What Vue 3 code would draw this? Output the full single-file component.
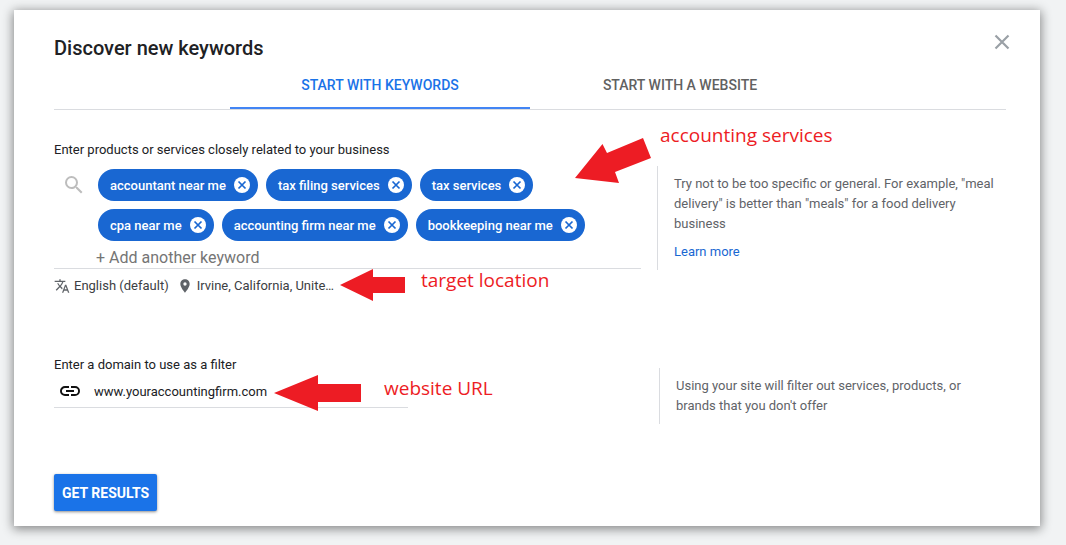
<script setup>
import { ref } from 'vue'

const keywords = ref([
  'accountant near me',
  'tax filing services',
  'tax services',
  'cpa near me',
  'accounting firm near me',
  'bookkeeping near me',
])
const draft = ref('')
const domain = ref('www.youraccountingfirm.com')
const activeTab = ref('keywords')
const tabs = [
  { id: 'keywords', label: 'START WITH KEYWORDS' },
  { id: 'website', label: 'START WITH A WEBSITE' },
]

function remove(word) {
  keywords.value = keywords.value.filter((k) => k !== word)
}
function add() {
  const word = draft.value.trim()
  if (word && !keywords.value.includes(word)) keywords.value.push(word)
  draft.value = ''
}
</script>

<template>
  <main class="card">
    <header class="head">
      <h1>Discover new keywords</h1>
      <button class="close" type="button" aria-label="Close">
        <svg width="16" height="16" viewBox="0 0 16 16"><path d="M1.5 1.5l13 13M14.5 1.5l-13 13" fill="none" stroke="#9aa0a6" stroke-width="2.2" /></svg>
      </button>
    </header>

    <nav class="tabs" role="tablist">
      <button
        v-for="tab in tabs"
        :key="tab.id"
        type="button"
        role="tab"
        class="tab"
        :class="{ active: activeTab === tab.id }"
        :aria-selected="activeTab === tab.id"
        @click="activeTab = tab.id"
      >{{ tab.label }}</button>
    </nav>

    <section class="row keywords">
      <div class="main">
        <label class="label" for="keyword">Enter products or services closely related to your business</label>
        <div class="field">
          <svg class="search" width="24" height="24" viewBox="0 0 24 24" fill="#bdbdbd"><path d="M15.5 14h-.79l-.28-.27A6.47 6.47 0 0 0 16 9.5 6.5 6.5 0 1 0 9.5 16c1.61 0 3.09-.59 4.23-1.57l.27.28v.79l5 4.99L20.49 19l-4.99-5zm-6 0a4.5 4.5 0 1 1 0-9 4.5 4.5 0 0 1 0 9z" /></svg>
          <div class="entry">
            <ul class="chips">
              <li v-for="word in keywords" :key="word" class="chip">
                <span>{{ word }}</span>
                <button type="button" class="remove" :aria-label="'Remove ' + word" @click="remove(word)">
                  <svg width="16" height="16" viewBox="0 0 16 16"><circle cx="8" cy="8" r="8" fill="#fff" /><path d="M4.5 4.5l7 7M11.500 4.500l-7 7" stroke="#1967d2" stroke-width="1.7" /></svg>
                </button>
              </li>
            </ul>
            <input id="keyword" v-model="draft" class="add" type="text" placeholder="+ Add another keyword" @keyup.enter="add" />
          </div>
        </div>
        <div class="settings">
          <button type="button" class="setting">
            <svg width="16" height="16" viewBox="0 0 24 24" fill="#5f6368"><path d="M12.87 15.07l-2.54-2.51.03-.03A17.52 17.52 0 0 0 14.07 6H17V4h-7V2H8v2H1v1.99h11.17C11.5 7.92 10.44 9.75 9 11.35 8.07 10.32 7.3 9.19 6.69 8h-2c.73 1.63 1.73 3.17 2.98 4.56l-5.09 5.02L4 19l5-5 3.11 3.11.76-2.04zM18.5 10h-2L12 22h2l1.12-3h4.75L21 22h2l-4.5-12zm-2.62 7l1.62-4.33L19.12 17h-3.24z" /></svg>
            <span>English (default)</span>
          </button>
          <button type="button" class="setting">
            <svg width="16" height="16" viewBox="0 0 24 24" fill="#5f6368"><path d="M12 2C8.13 2 5 5.13 5 9c0 5.25 7 13 7 13s7-7.75 7-13c0-3.87-3.13-7-7-7zm0 9.5a2.5 2.5 0 0 1 0-5 2.5 2.5 0 0 1 0 5z" /></svg>
            <span>Irvine, California, Unite…</span>
          </button>
        </div>
      </div>
      <aside class="hint">
        <p>Try not to be too specific or general. For example, "meal delivery" is better than "meals" for a food delivery business</p>
        <a href="#">Learn more</a>
      </aside>
    </section>

    <section class="row domain">
      <div class="main">
        <label class="label" for="domain">Enter a domain to use as a filter</label>
        <div class="url">
          <svg width="24" height="24" viewBox="0 0 24 24" fill="#111"><path d="M3.9 12c0-1.71 1.39-3.1 3.1-3.1h4V7H7a5 5 0 0 0 0 10h4v-1.9H7c-1.71 0-3.1-1.39-3.1-3.1zM8 13h8v-2H8v2zm9-6h-4v1.9h4a3.1 3.1 0 0 1 0 6.2h-4V17h4a5 5 0 0 0 0-10z" /></svg>
          <input id="domain" v-model="domain" type="text" />
        </div>
      </div>
      <aside class="hint">
        <p>Using your site will filter out services, products, or brands that you don't offer</p>
      </aside>
    </section>

    <button type="button" class="submit">GET RESULTS</button>

    <svg class="arrow arrow-services" width="76" height="46" viewBox="0 0 76 46"><path d="M0 40L27.500 6L32 15L68 0L76 20L40 34L44 45Z" /></svg>
    <span class="note note-services">accounting services</span>
    <svg class="arrow arrow-location" width="65" height="32" viewBox="0 0 65 32"><path d="M0 16L33 0V8H65V24H33V32Z" /></svg>
    <span class="note note-location">target location</span>
    <svg class="arrow arrow-url" width="87" height="36" viewBox="0 0 87 36"><path d="M0 18L44 0V9H87V27H44V36Z" /></svg>
    <span class="note note-url">website URL</span>
  </main>
</template>

<style>
body {
  background: #f1f3f4;
}
</style>

<style scoped>
* {
  box-sizing: border-box;
}
.card {
  position: relative;
  margin: 10px 26px 19px 14px;
  padding: 24px 34px 15px 40px;
  background: #fff;
  box-shadow: 0 2px 10px 1px rgba(0, 0, 0, 0.45);
  font-family: Roboto, "Liberation Sans", sans-serif;
  font-size: 13px;
  color: #202124;
}
button {
  padding: 0;
  border: 0;
  background: none;
  font: inherit;
  color: inherit;
  cursor: pointer;
}
input {
  min-width: 0;
  padding: 0;
  border: 0;
  outline: 0;
  background: none;
  font: inherit;
  color: inherit;
}
svg {
  display: block;
  flex: none;
}
p,
ul {
  margin: 0;
  padding: 0;
}
.head {
  display: flex;
  justify-content: space-between;
  align-items: flex-start;
}
h1 {
  margin: 0;
  font-size: 20px;
  line-height: 28px;
  font-weight: 500;
}
.close {
  margin-right: -4px;
}
.tabs {
  display: flex;
  justify-content: center;
  border-bottom: 1px solid #dadce0;
}
.tab {
  width: 300px;
  height: 47px;
  border-bottom: 2px solid transparent;
  font-size: 14px;
  font-weight: 500;
  color: #616161;
}
.tab.active {
  color: #1a73e8;
  border-bottom-color: #4285f4;
}
.row {
  display: flex;
  gap: 16px;
  align-items: flex-start;
}
.main {
  flex: 1;
  min-width: 0;
}
.label {
  display: block;
  line-height: 20px;
}
.keywords {
  margin-top: 30px;
}
.field {
  display: flex;
  gap: 10px;
  padding: 9px 0 0 8px;
  border-bottom: 1px solid #dadce0;
}
.search {
  margin-top: 4px;
}
.entry {
  flex: 1;
  min-width: 0;
}
.chips {
  display: flex;
  flex-wrap: wrap;
  gap: 8px;
  margin-left: 2px;
  list-style: none;
}
.chip {
  display: flex;
  align-items: center;
  gap: 8px;
  height: 32px;
  padding: 0 8px 0 12px;
  border-radius: 16px;
  background: #1967d2;
  color: #fff;
  font-weight: 500;
}
.add {
  display: block;
  width: 100%;
  height: 27px;
  padding-top: 6px;
  font-size: 16px;
}
.add::placeholder {
  color: #757575;
  opacity: 1;
}
.settings {
  display: flex;
  gap: 8px;
  padding-top: 7px;
  line-height: 20px;
  color: #3c4043;
}
.setting {
  display: flex;
  align-items: center;
  gap: 4px;
}
.hint {
  width: 349px;
  padding: 8px 6px 8px 16px;
  border-left: 1px solid #dadce0;
  line-height: 20px;
  color: #5f6368;
}
.hint a {
  display: block;
  margin-top: 8px;
  color: #1967d2;
  text-decoration: none;
}
.keywords .hint {
  margin-top: 26px;
}
.domain {
  margin-top: 59px;
}
.domain .hint {
  width: 347px;
  margin-top: 13px;
}
.url {
  display: flex;
  align-items: center;
  gap: 12px;
  width: 354px;
  max-width: 100%;
  height: 33px;
  padding-left: 4px;
  border-bottom: 1px solid #dadce0;
}
.url input {
  flex: 1;
}
.submit {
  display: block;
  margin-top: 50px;
  padding: 0 8px;
  height: 37px;
  border-radius: 2px;
  background: #1a73e8;
  box-shadow: 0 1px 3px rgba(0, 0, 0, 0.45);
  color: #fff;
  font-size: 14px;
  font-weight: 700;
}
.arrow {
  position: absolute;
  fill: #ed1c24;
}
.note {
  position: absolute;
  font-family: "Open Sans", "Noto Sans", sans-serif;
  font-size: 19px;
  line-height: 26px;
  white-space: nowrap;
  color: #ed1c24;
}
.arrow-services {
  left: 561px;
  top: 128px;
}
.note-services {
  left: 646px;
  top: 112px;
}
.arrow-location {
  left: 326px;
  top: 259px;
}
.note-location {
  left: 407px;
  top: 257px;
}
.arrow-url {
  left: 260px;
  top: 365px;
}
.note-url {
  left: 370px;
  top: 365px;
}
</style>
